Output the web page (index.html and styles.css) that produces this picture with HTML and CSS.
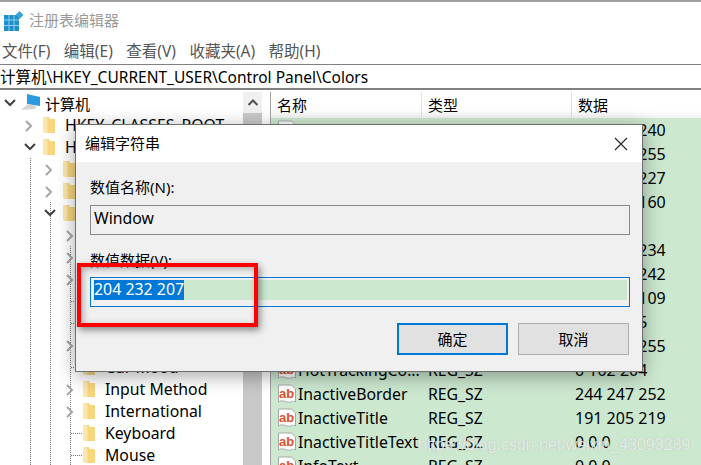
FILE: index.html
```html
<!DOCTYPE html>
<html lang="zh-CN">
<head>
  <meta charset="UTF-8">
  <title>注册表编辑器</title>
  <link rel="stylesheet" href="styles.css">
</head>
<body>
  <svg class="defs" width="0" height="0">
    <symbol id="folder" viewBox="0 0 12 18">
      <path d="M0 1h6l1 2h5v14H1.500L0 15z" fill="#f7d67e"/>
      <path d="M0 1h3l1.500 2v14H1.500L0 15z" fill="#fbe7ad"/>
    </symbol>
    <symbol id="right" viewBox="0 0 10 12">
      <path d="M2 1l5 5-5 5" fill="none" stroke="#a6a6a6" stroke-width="2"/>
    </symbol>
    <symbol id="down" viewBox="0 0 12 10">
      <path d="M1 2l5 5 5-5" fill="none" stroke="#404040" stroke-width="2"/>
    </symbol>
    <symbol id="value" viewBox="0 0 20 20">
      <path d="M1.500 1h13l4 4v13c-3-2-5 1-8.500 0s-5-2-8.500 0z" fill="#fff" stroke="#a9a9a9"/>
      <text x="2" y="13.500" class="ab-text">ab</text>
    </symbol>
  </svg>

  <div class="app">
    <!-- Title -->
    <div class="titlebar">
      <svg class="app-icon" width="20" height="20" viewBox="0 0 20 20">
        <path d="M0 4h15v16H0z" fill="#1f8fc9"/>
        <path d="M5 4v16M10 4v16M0 9h15M0 14.500h15" stroke="#8fd0ee" stroke-width="1"/>
        <path d="M15.500 0l4 4-4 4-4-4z" fill="#39a3d8"/>
      </svg>
      <span>注册表编辑器</span>
    </div>

    <!-- Menu -->
    <div class="menubar">
      <span>文件(F)</span>
      <span>编辑(E)</span>
      <span>查看(V)</span>
      <span>收藏夹(A)</span>
      <span>帮助(H)</span>
    </div>

    <div class="address">计算机\HKEY_CURRENT_USER\Control Panel\Colors</div>

    <div class="panes">
      <!-- Tree -->
      <div class="tree">
        <div class="guide guide-a"></div>
        <div class="guide guide-b"></div>
        <div class="guide guide-c"></div>
        <div class="row root">
          <svg class="chev" width="12" height="10"><use href="#down"/></svg>
          <svg class="pc" width="22" height="20" viewBox="0 0 22 20">
            <path d="M7 1l13 3v9L7 11z" fill="#2b9be0"/>
            <path d="M8 11l8 2-1 3-14 1z" fill="#d4d4d4"/>
          </svg>
          <span>计算机</span>
        </div>
        <div class="row lv1"><svg class="chev" width="10" height="12"><use href="#right"/></svg><svg class="fold" width="12" height="18"><use href="#folder"/></svg><span>HKEY_CLASSES_ROOT</span></div>
        <div class="row lv1"><svg class="chev" width="12" height="10"><use href="#down"/></svg><svg class="fold" width="12" height="18"><use href="#folder"/></svg><span>HKEY_CURRENT_USER</span></div>
        <div class="row lv2"><svg class="chev" width="10" height="12"><use href="#right"/></svg><svg class="fold" width="12" height="18"><use href="#folder"/></svg><span>AppEvents</span></div>
        <div class="row lv2"><svg class="chev" width="10" height="12"><use href="#right"/></svg><svg class="fold" width="12" height="18"><use href="#folder"/></svg><span>Console</span></div>
        <div class="row lv2"><svg class="chev" width="12" height="10"><use href="#down"/></svg><svg class="fold" width="12" height="18"><use href="#folder"/></svg><span>Control Panel</span></div>
        <div class="row lv3"><svg class="chev" width="10" height="12"><use href="#right"/></svg><svg class="fold" width="12" height="18"><use href="#folder"/></svg><span>Accessibility</span></div>
        <div class="row lv3"><svg class="chev" width="10" height="12"><use href="#right"/></svg><svg class="fold" width="12" height="18"><use href="#folder"/></svg><span>Appearance</span></div>
        <div class="row lv3"><svg class="chev" width="10" height="12"><use href="#right"/></svg><svg class="fold" width="12" height="18"><use href="#folder"/></svg><span>Bluetooth</span></div>
        <div class="row lv3"><i class="dots"></i><svg class="fold" width="12" height="18"><use href="#folder"/></svg><span>Colors</span></div>
        <div class="row lv3"><i class="dots"></i><svg class="fold" width="12" height="18"><use href="#folder"/></svg><span>Cursors</span></div>
        <div class="row lv3"><svg class="chev" width="10" height="12"><use href="#right"/></svg><svg class="fold" width="12" height="18"><use href="#folder"/></svg><span>Desktop</span></div>
        <div class="row lv3"><i class="dots"></i><svg class="fold" width="12" height="18"><use href="#folder"/></svg><span>Cur Mood</span></div>
        <div class="row lv3"><svg class="chev" width="10" height="12"><use href="#right"/></svg><svg class="fold" width="12" height="18"><use href="#folder"/></svg><span>Input Method</span></div>
        <div class="row lv3"><svg class="chev" width="10" height="12"><use href="#right"/></svg><svg class="fold" width="12" height="18"><use href="#folder"/></svg><span>International</span></div>
        <div class="row lv3"><i class="dots"></i><svg class="fold" width="12" height="18"><use href="#folder"/></svg><span>Keyboard</span></div>
        <div class="row lv3"><i class="dots"></i><svg class="fold" width="12" height="18"><use href="#folder"/></svg><span>Mouse</span></div>
      </div>

      <div class="scrollbar">
        <div class="scroll-up">
          <svg width="12" height="10" viewBox="0 0 12 10"><path d="M1.500 7L6 2.500 10.500 7" fill="none" stroke="#505050" stroke-width="2"/></svg>
        </div>
      </div>

      <div class="splitter"></div>

      <!-- Values -->
      <div class="list">
        <div class="list-head">
          <div class="col-name">名称</div>
          <div class="col-type">类型</div>
          <div class="col-data">数据</div>
        </div>
        <div class="item"><svg class="val" width="20" height="20"><use href="#value"/></svg><span class="name">ButtonFace</span><span class="type">REG_SZ</span><span class="data">240 240 240</span></div>
        <div class="item"><svg class="val" width="20" height="20"><use href="#value"/></svg><span class="name">ButtonHilight</span><span class="type">REG_SZ</span><span class="data">255 255 255</span></div>
        <div class="item"><svg class="val" width="20" height="20"><use href="#value"/></svg><span class="name">ButtonLight</span><span class="type">REG_SZ</span><span class="data">227 227 227</span></div>
        <div class="item"><svg class="val" width="20" height="20"><use href="#value"/></svg><span class="name">ButtonShadow</span><span class="type">REG_SZ</span><span class="data">160 160 160</span></div>
        <div class="item"><svg class="val" width="20" height="20"><use href="#value"/></svg><span class="name">ButtonText</span><span class="type">REG_SZ</span><span class="data">0 0 0</span></div>
        <div class="item"><svg class="val" width="20" height="20"><use href="#value"/></svg><span class="name">GradientActive...</span><span class="type">REG_SZ</span><span class="data">185 209 234</span></div>
        <div class="item"><svg class="val" width="20" height="20"><use href="#value"/></svg><span class="name">GradientInactiv...</span><span class="type">REG_SZ</span><span class="data">215 228 242</span></div>
        <div class="item"><svg class="val" width="20" height="20"><use href="#value"/></svg><span class="name">GrayText</span><span class="type">REG_SZ</span><span class="data">109 109 109</span></div>
        <div class="item"><svg class="val" width="20" height="20"><use href="#value"/></svg><span class="name">Hilight</span><span class="type">REG_SZ</span><span class="data">0 120 215</span></div>
        <div class="item"><svg class="val" width="20" height="20"><use href="#value"/></svg><span class="name">HilightText</span><span class="type">REG_SZ</span><span class="data">255 255 255</span></div>
        <div class="item"><svg class="val" width="20" height="20"><use href="#value"/></svg><span class="name">HotTrackingCo...</span><span class="type">REG_SZ</span><span class="data">0 102 204</span></div>
        <div class="item"><svg class="val" width="20" height="20"><use href="#value"/></svg><span class="name">InactiveBorder</span><span class="type">REG_SZ</span><span class="data">244 247 252</span></div>
        <div class="item"><svg class="val" width="20" height="20"><use href="#value"/></svg><span class="name">InactiveTitle</span><span class="type">REG_SZ</span><span class="data">191 205 219</span></div>
        <div class="item"><svg class="val" width="20" height="20"><use href="#value"/></svg><span class="name">InactiveTitleText</span><span class="type">REG_SZ</span><span class="data">0 0 0</span></div>
        <div class="item"><svg class="val" width="20" height="20"><use href="#value"/></svg><span class="name">InfoText</span><span class="type">REG_SZ</span><span class="data">0 0 0</span></div>
      </div>
    </div>
  </div>

  <!-- Edit String dialog -->
  <div class="dialog">
    <div class="dialog-title">
      <span>编辑字符串</span>
      <svg width="14" height="14" viewBox="0 0 14 14"><path d="M1 1l12 12M13 1L1 13" stroke="#222" stroke-width="1.100" fill="none"/></svg>
    </div>
    <div class="dialog-body">
      <label class="field-label">数值名称(N):</label>
      <div class="field field-name">Window</div>
      <label class="field-label label-data">数值数据(V):</label>
      <div class="field field-data"><div class="field-inner"><span class="selected">204 232 207</span></div></div>
      <div class="buttons">
        <div class="btn btn-default">确定</div>
        <div class="btn">取消</div>
      </div>
    </div>
  </div>

  <div class="red-box"></div>
  <div class="watermark">https://blog.csdn.net/weixin_43093289</div>
</body>
</html>
```

FILE: styles.css
```css
body {
  margin: 0;
  width: 701px;
  height: 465px;
  overflow: hidden;
  background: #fff;
  color: #000;
  font-family: "Noto Sans", "Noto Sans CJK SC", sans-serif;
  font-size: 15px;
  position: relative;
}

.defs {
  position: absolute;
}

.ab-text {
  font-family: "Liberation Sans", sans-serif;
  font-size: 13px;
  font-weight: bold;
  fill: #e0512d;
}

.app {
  height: 465px;
  border-top: 2px solid #a0a0a0;
  box-sizing: border-box;
  display: flex;
  flex-direction: column;
}

.titlebar {
  height: 37px;
  display: flex;
  align-items: center;
  gap: 5px;
  padding-left: 4px;
  color: #999;
}

.titlebar span {
  margin-bottom: 2px;
}

.menubar {
  height: 25px;
  box-sizing: border-box;
  padding: 0 0 2px 2px;
  display: flex;
  align-items: center;
  gap: 13.5px;
  color: #555;
  font-size: 15.5px;
}

.address {
  height: 23px;
  line-height: 24px;
  border-top: 1px solid #808080;
  border-bottom: 2px solid #808080;
  white-space: nowrap;
  font-size: 15.5px;
}

.panes {
  flex: 1;
  margin-top: 2px;
  display: flex;
  min-height: 0;
  font-size: 15.8px;
}

/* tree */
.tree {
  width: 243px;
  position: relative;
  overflow: hidden;
}

.guide {
  position: absolute;
  width: 0;
  border-left: 1px dotted #777;
  bottom: 0;
}

.guide-a { left: 30px; top: 66px; }
.guide-b { left: 50px; top: 110px; }
.guide-c { left: 70px; top: 154px; }

.row {
  height: 22px;
  display: flex;
  align-items: center;
  white-space: nowrap;
  position: relative;
}

.chev {
  position: absolute;
  top: 6px;
}

.dots {
  position: absolute;
  left: 71px;
  width: 11px;
  border-top: 1px dotted #777;
}

.root .chev { left: 4px; }
.lv1 .chev { left: 24px; }
.lv2 .chev { left: 44px; }
.lv3 .chev { left: 65px; }

.root { padding-left: 20px; font-size: 15px; }
.root .pc { margin-right: 3px; }
.lv1 { padding-left: 43px; }
.lv2 { padding-left: 63px; }
.lv3 { padding-left: 83px; }
.row .fold { margin-right: 10px; flex: none; }

.scrollbar {
  width: 19px;
  background: #c8c8c8;
}

.scroll-up {
  height: 21px;
  background: #f0f0f0;
  display: flex;
  align-items: center;
  justify-content: center;
}

.splitter {
  width: 9px;
  box-sizing: border-box;
  border-left: 2px solid #fff;
  border-right: 1px solid #a0a0a0;
}

/* value list */
.list {
  flex: 1;
  background: #cce8cf;
  overflow: hidden;
}

.list-head {
  height: 26px;
  display: flex;
  background: linear-gradient(#fff 70%, #f2f2f2);
  font-size: 15px;
}

.list-head div {
  padding-left: 6px;
  line-height: 26px;
  box-sizing: border-box;
  border-right: 1px solid #e0e0e0;
}

.col-name { width: 151px; }
.col-type { width: 150px; }
.col-data { flex: 1; border-right: none !important; }

.item {
  height: 24px;
  display: flex;
  align-items: center;
  white-space: nowrap;
}

.val {
  margin-left: 6px;
  margin-right: 1px;
  flex: none;
}

.name { width: 130px; flex: none; }
.type { width: 147px; flex: none; }
.data { font-size: 16px; }

/* dialog */
.dialog {
  position: absolute;
  left: 75px;
  top: 124px;
  width: 568px;
  height: 248px;
  box-sizing: border-box;
  border: 1px solid #6f6f6f;
  background: #f0f0f0;
  box-shadow: 0 4px 18px rgba(0, 0, 0, 0.35);
}

.dialog-title {
  height: 37px;
  background: #fff;
  display: flex;
  align-items: center;
  justify-content: space-between;
  padding: 0 14px 0 9px;
}

.dialog-title span {
  margin-bottom: 3px;
}

.dialog-body {
  padding: 14px 12px 0 14px;
}

.field-label {
  display: block;
  height: 22px;
  line-height: 22px;
}

.field {
  box-sizing: border-box;
  height: 30px;
  border: 1px solid #8a8a8a;
  margin-top: 7px;
  padding-left: 3px;
  font-size: 15.8px;
}

.field-name {
  line-height: 24px;
}

.label-data {
  margin-top: 14px;
}

.field-data {
  border-color: #0078d7;
  margin-top: 6px;
  padding: 2px 2px 5px 3px;
}

.field-inner {
  height: 20px;
  background: #cce8cf;
}

.selected {
  display: inline-block;
  vertical-align: top;
  height: 20px;
  line-height: 18px;
  background: #0078d7;
  color: #fff;
  font-size: 15.9px;
}

.buttons {
  display: flex;
  justify-content: flex-end;
  gap: 10px;
  margin: 16px 1px 0 0;
}

.btn {
  width: 111px;
  height: 32px;
  line-height: 30px;
  box-sizing: border-box;
  border: 1px solid #adadad;
  background: #e1e1e1;
  text-align: center;
}

.btn-default {
  border: 2px solid #0078d7;
  line-height: 28px;
}

/* overlays */
.red-box {
  position: absolute;
  left: 77px;
  top: 263px;
  width: 181px;
  height: 64px;
  box-sizing: border-box;
  border: 4px solid #f00;
  box-shadow: 2px 3px 7px rgba(0, 0, 0, 0.45), inset 2px 2px 6px rgba(0, 0, 0, 0.3);
}

.watermark {
  position: absolute;
  left: 418px;
  top: 436px;
  color: rgba(255, 255, 255, 0.75);
  font-family: "Liberation Sans", sans-serif;
  font-size: 16px;
  white-space: nowrap;
  text-shadow: 0 0 1px rgba(120, 120, 120, 0.5);
}
```
